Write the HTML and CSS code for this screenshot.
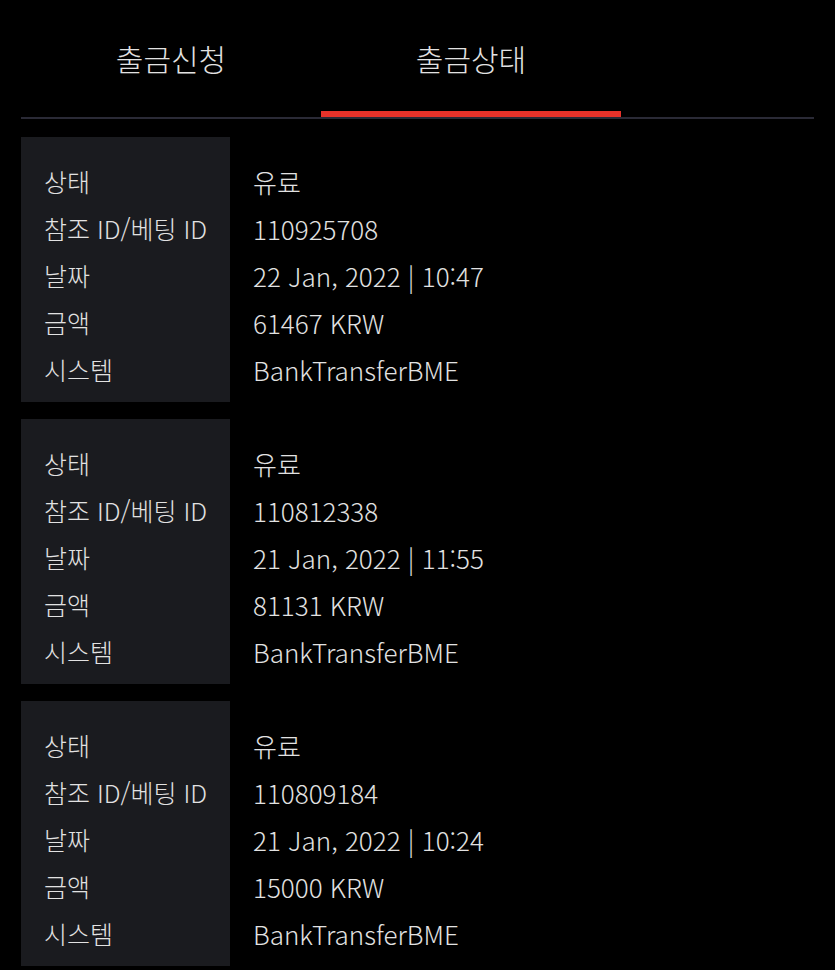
FILE: index.html
```html
<!DOCTYPE html>
<html lang="ko">
<head>
<meta charset="utf-8">
<link rel="stylesheet" href="styles.css">
</head>
<body>
<div class="page">
  <nav class="tabs">
    <div class="tab">출금신청</div>
    <div class="tab active">출금상태</div>
  </nav>
  <div class="list">
    <div class="card">
      <div class="labels">
        <div class="row">상태</div>
        <div class="row">참조 ID/베팅 ID</div>
        <div class="row">날짜</div>
        <div class="row">금액</div>
        <div class="row">시스템</div>
      </div>
      <div class="values">
        <div class="row">유료</div>
        <div class="row">110925708</div>
        <div class="row">22 Jan, 2022 | 10:47</div>
        <div class="row">61467 KRW</div>
        <div class="row">BankTransferBME</div>
      </div>
    </div>
    <div class="card">
      <div class="labels">
        <div class="row">상태</div>
        <div class="row">참조 ID/베팅 ID</div>
        <div class="row">날짜</div>
        <div class="row">금액</div>
        <div class="row">시스템</div>
      </div>
      <div class="values">
        <div class="row">유료</div>
        <div class="row">110812338</div>
        <div class="row">21 Jan, 2022 | 11:55</div>
        <div class="row">81131 KRW</div>
        <div class="row">BankTransferBME</div>
      </div>
    </div>
    <div class="card">
      <div class="labels">
        <div class="row">상태</div>
        <div class="row">참조 ID/베팅 ID</div>
        <div class="row">날짜</div>
        <div class="row">금액</div>
        <div class="row">시스템</div>
      </div>
      <div class="values">
        <div class="row">유료</div>
        <div class="row">110809184</div>
        <div class="row">21 Jan, 2022 | 10:24</div>
        <div class="row">15000 KRW</div>
        <div class="row">BankTransferBME</div>
      </div>
    </div>
  </div>
</div>
</body>
</html>
```

FILE: styles.css
```css
html, body {
  margin: 0;
  padding: 0;
  background: #000;
}
body {
  font-family: "Noto Sans CJK KR", "Noto Sans", sans-serif;
  font-weight: 300;
  color: #e2e2e2;
}
.page {
  padding: 0 21px 0 21px;
}
.tabs {
  display: flex;
  height: 117px;
  border-bottom: 2px solid #2a2a36;
  box-sizing: content-box;
}
.tab {
  width: 300px;
  display: flex;
  align-items: center;
  justify-content: center;
  font-size: 30px;
  padding-top: 4px;
  line-height: 1;
  box-sizing: border-box;
  height: 117px;
  border-bottom: 6px solid transparent;
  margin-bottom: -1px;
}
.tab.active {
  border-bottom-color: #e8322a;
}
.list {
  display: flex;
  flex-direction: column;
  gap: 17px;
  padding-top: 18px;
}
.card {
  display: flex;
  height: 265px;
}
.labels {
  width: 209px;
  background: #1a1b1f;
  padding: 21px 0 9px 23px;
  box-sizing: border-box;
}
.values {
  padding: 21px 0 9px 23px;
  box-sizing: border-box;
}
.row {
  height: 47px;
  line-height: 47px;
  font-size: 25px;
  white-space: nowrap;
}
.values .row {
  font-size: 26px;
}
```
